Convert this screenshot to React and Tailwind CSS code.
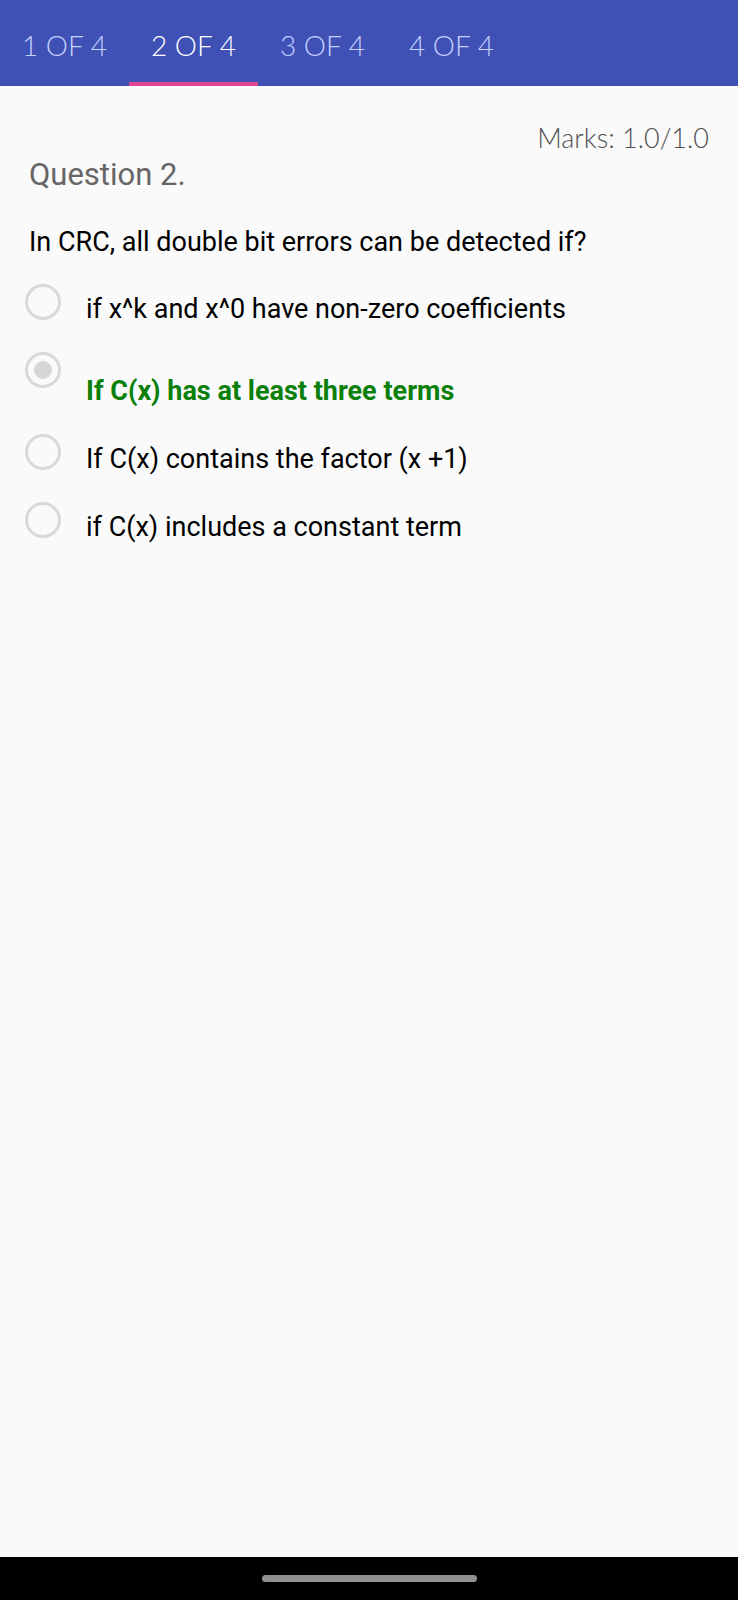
import React, { useState } from "react";
import clsx from "clsx";

const tabs = ["1 OF 4", "2 OF 4", "3 OF 4", "4 OF 4"];

const options = [
  { id: "a", text: "if x^k and x^0 have non-zero coefficients" },
  { id: "b", text: "If C(x) has at least three terms", correct: true },
  { id: "c", text: "If C(x) contains the factor (x +1)" },
  { id: "d", text: "if C(x) includes a constant term" },
];

export default function App() {
  const [active, setActive] = useState(1);

  return (
    <div className="flex min-h-screen flex-col bg-[#fafafa] font-['Roboto',sans-serif] text-[27px] leading-8 text-black">
      <nav className="flex h-[86px] bg-[#3f51b5] font-['Lato',sans-serif] text-[28px] font-light">
        {tabs.map((tab, i) => (
          <button
            key={tab}
            type="button"
            onClick={() => setActive(i)}
            className={clsx(
              "w-[129px] border-b-4 pt-2 whitespace-nowrap",
              i === active
                ? "border-[#e04592] text-white"
                : "border-transparent text-[#c5d0ff]"
            )}
          >
            {tab}
          </button>
        ))}
      </nav>

      <main className="flex-1 pt-9">
        <p className="px-[29px] text-right font-['Lato',sans-serif] text-[27px] font-light text-[#505050]">
          Marks: 1.0/1.0
        </p>
        <h1 className="mt-[5px] px-[29px] text-[31px] text-[#666666]">
          Question 2.
        </h1>

        <fieldset className="mt-[35px]">
          <legend className="px-[29px]">
            In CRC, all double bit errors can be detected if?
          </legend>
          <div className="flex flex-col gap-[27px] px-[25px] pt-[26px]">
            {options.map((option) => (
              <div key={option.id} className="flex items-start gap-[25px]">
                <input
                  id={option.id}
                  type="radio"
                  name="answer"
                  disabled
                  defaultChecked={option.correct}
                  className="flex size-9 shrink-0 appearance-none items-center justify-center rounded-full border-3 border-[#d9d9d9] before:size-[18px] before:rounded-full checked:before:bg-[#d6d6d6]"
                />
                <label
                  htmlFor={option.id}
                  className={clsx(
                    option.correct
                      ? "pt-[23px] font-bold text-[#0a800a]"
                      : "pt-[9px]"
                  )}
                >
                  {option.text}
                </label>
              </div>
            ))}
          </div>
        </fieldset>
      </main>

      <footer className="flex h-[43px] items-center justify-center bg-black">
        <div className="h-[7px] w-[215px] rounded-full bg-[#909090]" />
      </footer>
    </div>
  );
}
